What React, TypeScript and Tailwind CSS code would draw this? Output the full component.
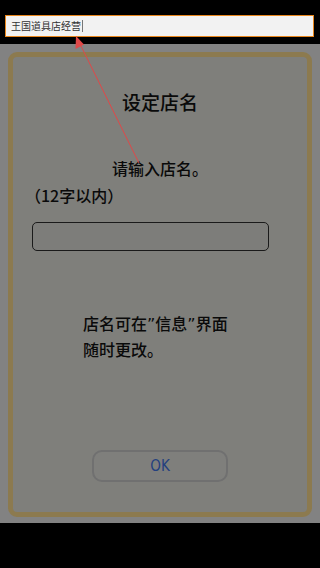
import React from "react";

const cjk = { fontFamily: '"Noto Sans CJK SC", "Noto Sans", sans-serif' };
const latin = { fontFamily: '"DejaVu Sans", sans-serif' };
const narrow = { fontFamily: '"DejaVu Sans Condensed", "DejaVu Sans", sans-serif' };

function Arrow() {
  // red annotation arrow from the top field down to the prompt text
  return (
    <svg
      className="pointer-events-none absolute left-0 top-0"
      width={320}
      height={568}
      viewBox="0 0 320 568"
    >
      <line x1={79} y1={42} x2={139} y2={163} stroke="#e04848" strokeWidth={1} />
      <polygon points="76,36 75.5,49 84,44.5" fill="#e04848" />
    </svg>
  );
}

export default function App() {
  return (
    <div className="relative h-[568px] w-[320px] overflow-hidden bg-black" style={cjk}>
      <div className="h-[44px] px-[5px] pt-[15px]">
        <div className="flex h-[22px] w-[309px] items-center border-[1.5px] border-[#e8861c] bg-[#f2f2f2] pl-[5px]">
          <span className="text-[10px] leading-none text-[#333]">王国道具店经营</span>
          <span className="ml-[1px] h-[12px] w-px bg-[#777]" />
        </div>
      </div>

      <div className="h-[479px] bg-[#828282] px-[8px] pt-[8px]">
        <div className="flex h-[465px] flex-col rounded-[9px] border-[5px] border-[#8c7a4f] bg-[#7f7f7b] text-[#0a0a0a]">
          <div className="mt-[33px] text-center text-[19px] font-medium leading-[24px]">设定店名</div>
          <div className="mt-[42px] text-center text-[16px] font-medium leading-[24px]">请输入店名。</div>
          <div className="mt-[3px] pl-[12px] text-[16px] font-medium leading-[24px]">（12字以内）</div>
          <div className="ml-[19px] mt-[15px] h-[29px] w-[237px] rounded-[5px] border border-[#1a1a1a] bg-[#7d7d7a]" />
          <div className="ml-[70px] mt-[60px] text-[16px] font-medium leading-[24px]">
            <div>
              店名可在<span style={latin}>”</span>信息<span style={latin}>”</span>界面
            </div>
            <div>随时更改。</div>
          </div>
          <div className="mx-auto mt-[89px] flex h-[32px] w-[136px] items-center justify-center rounded-[10px] border-2 border-[#707070] bg-[#7f7f7c]">
            <span className="text-[15px] font-medium text-[#23407f]" style={narrow}>
              OK
            </span>
          </div>
        </div>
      </div>

      <Arrow />
    </div>
  );
}
